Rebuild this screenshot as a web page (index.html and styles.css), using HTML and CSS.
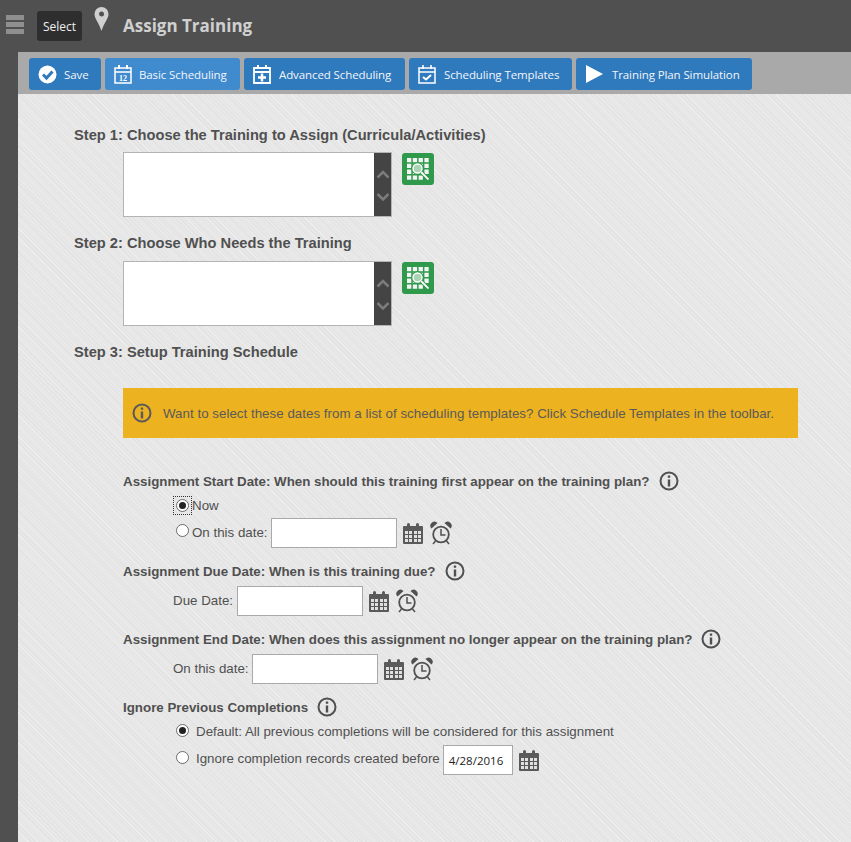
FILE: index.html
```html
<!DOCTYPE html>
<html lang="en">
<head>
<meta charset="utf-8">
<title>Assign Training</title>
<link rel="stylesheet" href="styles.css">
</head>
<body>
<svg class="defs" width="0" height="0" aria-hidden="true">
  <symbol id="cal" viewBox="0 0 22 22">
    <path fill="#5a5a5a" d="M2 3h3V1.500a1.500 1.500 0 0 1 3 0V3h6V1.500a1.500 1.500 0 0 1 3 0V3h3a1 1 0 0 1 1 1v16a1 1 0 0 1-1 1H2a1 1 0 0 1-1-1V4a1 1 0 0 1 1-1z"/>
    <path fill="#e0e0e0" d="M3 8h3v3H3zM7 8h3v3H7zM12 8h3v3h-3zM16 8h3v3h-3zM3 12h3v3H3zM7 12h3v3H7zM12 12h3v3h-3zM16 12h3v3h-3zM3 16h3v3H3zM7 16h3v3H7zM12 16h3v3h-3zM16 16h3v3h-3z"/>
  </symbol>
  <symbol id="clock" viewBox="0 0 22 24">
    <circle cx="11" cy="13.500" r="7.800" fill="none" stroke="#505050" stroke-width="1.800"/>
    <path fill="none" stroke="#505050" stroke-width="1.500" d="M11 8v6h4.500M5.500 20l-2.500 3M16.500 20l2.500 3"/>
    <path fill="#505050" d="M1.500 7.500a4 4 0 0 1 6-5.500zM20.500 7.500a4 4 0 0 0-6-5.500z"/>
  </symbol>
  <symbol id="info" viewBox="0 0 20 20">
    <circle cx="10" cy="10" r="8.500" fill="none" stroke="currentColor" stroke-width="2"/>
    <path fill="currentColor" d="M8.800 4.500h2.400v2.300H8.800zM8.800 8.500h2.400v7H8.800z"/>
  </symbol>
  <symbol id="grid" viewBox="0 0 22 22">
    <path fill="#f4f4f4" d="M0 0h4.300v4.300H0zM5.800 0h4.300v4.300H5.800zM11.600 0h4.300v4.300h-4.300zM17.400 0h4.300v4.300h-4.300zM0 5.800h4.300v4.300H0zM5.800 5.800h4.300v4.300H5.800zM11.600 5.800h4.300v4.300h-4.300zM17.400 5.800h4.300v4.300h-4.300zM0 11.600h4.300v4.300H0zM5.800 11.600h4.300v4.300H5.800zM11.600 11.600h4.300v4.300h-4.300zM17.400 11.600h4.300v4.300h-4.300zM0 17.400h4.300v4.300H0zM5.800 17.400h4.300v4.300H5.800zM11.600 17.400h4.300v4.300h-4.300z"/>
    <circle cx="10.500" cy="10.500" r="6.200" fill="#2f9a4b"/>
    <circle cx="10.500" cy="10.500" r="4.500" fill="#a9d5b5" stroke="#fff" stroke-width="1.400"/>
    <path stroke="#2f9a4b" stroke-width="3.600" d="M14 14l7.500 7.500"/>
    <path stroke="#fff" stroke-width="1.800" d="M14 14l7.500 7.500"/>
  </symbol>
</svg>

<header class="topbar">
  <span class="menu"><i></i><i></i><i></i></span>
  <button class="select">Select</button>
  <svg class="pin" width="15" height="24" viewBox="0 0 15 24"><path fill="#d0d0d0" fill-rule="evenodd" d="M7.500 0A7 7 0 0 0 .5 7c0 4.500 4.500 9 7 17 2.500-8 7-12.500 7-17a7 7 0 0 0-7-7zm0 4.500a2.500 2.500 0 1 1 0 5 2.500 2.500 0 0 1 0-5z"/></svg>
  <h1 class="title">Assign Training</h1>
</header>

<div class="shell">
  <nav class="toolbar">
    <a class="tool tool-save">
      <svg class="tool-icon" width="19" height="19" viewBox="0 0 19 19"><circle cx="9.500" cy="9.500" r="9" fill="#fff"/><path fill="none" stroke="#2f79bd" stroke-width="3" d="M5 9.500l3.500 3.500 6-6.500"/></svg>
      Save
    </a>
    <a class="tool tool-basic active">
      <svg class="tool-icon" width="18" height="20" viewBox="0 0 18 20"><path fill="none" stroke="#fff" stroke-width="1.500" d="M1 4h16v15H1zM1 8h16"/><path stroke="#fff" stroke-width="2" d="M5 1v4M13 1v4"/><text x="9" y="16.500" font-family="Liberation Serif" font-weight="700" font-size="8" text-anchor="middle" fill="#fff">12</text></svg>
      Basic Scheduling
    </a>
    <a class="tool tool-adv">
      <svg class="tool-icon" width="18" height="20" viewBox="0 0 18 20"><path fill="none" stroke="#fff" stroke-width="1.800" d="M1 4h16v15H1zM1 8h16"/><path stroke="#fff" stroke-width="2" d="M5 1v4M13 1v4"/><path stroke="#fff" stroke-width="2.500" d="M9 9.500v8M5 13.500h8"/></svg>
      Advanced Scheduling
    </a>
    <a class="tool tool-tmpl">
      <svg class="tool-icon" width="18" height="20" viewBox="0 0 18 20"><path fill="none" stroke="#fff" stroke-width="1.500" d="M1 4h16v15H1zM1 8h16"/><path stroke="#fff" stroke-width="1.600" d="M5 1v4M13 1v4"/><path fill="none" stroke="#fff" stroke-width="2" d="M5 13l3 2.500 5-4.500"/></svg>
      Scheduling Templates
    </a>
    <a class="tool tool-sim">
      <svg class="tool-icon" width="17" height="18" viewBox="0 0 17 18"><path fill="#fff" d="M0 0l17 9L0 18z"/></svg>
      Training Plan Simulation
    </a>
  </nav>

  <main class="content">
    <h2 class="step">Step 1: Choose the Training to Assign (Curricula/Activities)</h2>
    <div class="picker">
      <div class="listbox"><span class="list-area"></span><span class="scroll"><svg width="14" height="48" viewBox="0 0 14 48"><path fill="none" stroke="#7c7c7c" stroke-width="2.500" d="M1.500 16.500l5.500-5.500 5.500 5.500M1.500 33l5.500 5.500 5.500-5.500"/></svg></span></div>
      <a class="lookup"><svg width="22" height="22"><use href="#grid"/></svg></a>
    </div>

    <h2 class="step step-2">Step 2: Choose Who Needs the Training</h2>
    <div class="picker picker-2">
      <div class="listbox"><span class="list-area"></span><span class="scroll"><svg width="14" height="48" viewBox="0 0 14 48"><path fill="none" stroke="#7c7c7c" stroke-width="2.500" d="M1.500 16.500l5.500-5.500 5.500 5.500M1.500 33l5.500 5.500 5.500-5.500"/></svg></span></div>
      <a class="lookup"><svg width="22" height="22"><use href="#grid"/></svg></a>
    </div>

    <h2 class="step step-3">Step 3: Setup Training Schedule</h2>

    <div class="indent">
      <div class="notice">
        <svg class="notice-icon" width="20" height="20"><use href="#info"/></svg>
        <span>Want to select these dates from a list of scheduling templates? Click Schedule Templates in the toolbar.</span>
      </div>

      <section class="group group-start">
        <h3 class="label">Assignment Start Date: When should this training first appear on the training plan? <svg class="info" width="20" height="20"><use href="#info"/></svg></h3>
        <div class="row row-now"><span class="focus"><span class="radio on"></span></span><span class="now">Now</span></div>
        <div class="row row-on"><span class="radio"></span><span class="rtext">On this date:</span><span class="field field-tight"></span><svg class="ic-cal" width="22" height="22"><use href="#cal"/></svg><svg class="ic-clock" width="22" height="24"><use href="#clock"/></svg></div>
      </section>

      <section class="group">
        <h3 class="label">Assignment Due Date: When is this training due? <svg class="info" width="20" height="20"><use href="#info"/></svg></h3>
        <div class="row row-date"><span class="rtext">Due Date:</span><span class="field"></span><svg class="ic-cal" width="22" height="22"><use href="#cal"/></svg><svg class="ic-clock" width="22" height="24"><use href="#clock"/></svg></div>
      </section>

      <section class="group">
        <h3 class="label">Assignment End Date: When does this assignment no longer appear on the training plan? <svg class="info" width="20" height="20"><use href="#info"/></svg></h3>
        <div class="row row-date"><span class="rtext">On this date:</span><span class="field field-tight"></span><svg class="ic-cal" width="22" height="22"><use href="#cal"/></svg><svg class="ic-clock" width="22" height="24"><use href="#clock"/></svg></div>
      </section>

      <section class="group">
        <h3 class="label">Ignore Previous Completions <svg class="info" width="20" height="20"><use href="#info"/></svg></h3>
        <div class="row row-default"><span class="radio on"></span><span class="rtext">Default: All previous completions will be considered for this assignment</span></div>
        <div class="row row-before"><span class="radio"></span><span class="rtext">Ignore completion records created before</span><span class="field field-tight field-date">4/28/2016</span><svg class="ic-cal" width="22" height="22"><use href="#cal"/></svg></div>
      </section>
    </div>
  </main>
</div>
</body>
</html>
```

FILE: styles.css
```css
* { box-sizing: border-box; }
html, body { margin: 0; padding: 0; height: 100%; overflow: hidden; }
body { background: #505050; font-family: "Liberation Sans", Arial, sans-serif; color: #505050; }
.defs { position: absolute; }

.topbar { height: 52px; display: flex; align-items: flex-start; background: #505050; }
.menu { display: flex; flex-direction: column; gap: 2px; margin: 15px 0 0 6px; width: 18px; }
.menu i { display: block; height: 5px; background: #8f8f8f; }
.select { margin: 11px 0 0 13px; width: 45px; height: 30px; padding: 0; border: 0; border-radius: 3px; background: #2e2e2e; color: #f0f0f0; font: 12px "Open Sans", sans-serif; }
.pin { margin: 7px 0 0 12px; }
.title { margin: 14px 0 0 14px; font: 700 17px/24px "Open Sans", sans-serif; color: #d0d0d0; }

.shell { margin-left: 18px; height: 790px; display: flex; flex-direction: column; }
.toolbar { height: 42px; flex: none; display: flex; gap: 4px; padding: 6px 0 0 11px; background: #a9a9a9; }
.tool { height: 32px; display: flex; align-items: center; border-radius: 3px; background: #2f79bd; color: #f2f6fa; font: 11.500px "Open Sans", sans-serif; letter-spacing: -.1px; white-space: nowrap; }
.tool.active { background: #408ace; }
.tool-save { width: 72px; padding-left: 9px; }
.tool-basic { width: 135px; padding-left: 9px; }
.tool-adv { width: 161px; padding-left: 9px; }
.tool-tmpl { width: 163px; padding-left: 9px; }
.tool-sim { width: 176px; padding-left: 10px; }
.tool-icon { margin-right: 7px; flex: none; }
.tool-adv .tool-icon, .tool-tmpl .tool-icon { margin-right: 8px; }
.tool-sim .tool-icon { margin-right: 9px; }

.content {
  flex: 1;
  padding: 33px 0 0 56px;
  background-color: #e7e7e7;
  background-image:
    repeating-linear-gradient(45deg, rgba(255,255,255,.22) 0 1px, rgba(255,255,255,0) 1px 7px),
    repeating-linear-gradient(45deg, #e3e3e3 0 1px, #e8e8e8 1px 3px);
}
.step { margin: 0; font-size: 14.670px; line-height: 16px; font-weight: 700; color: #505050; }
.step-2 { margin-top: 18px; }
.step-3 { margin-top: 18px; }
.picker { display: flex; align-items: flex-start; margin: 9px 0 0 49px; }
.picker-2 { margin-top: 10px; }
.listbox { width: 269px; height: 65px; display: flex; background: #fff; border: 1px solid #b4b4b4; }
.list-area { flex: 1; }
.scroll { width: 17px; background: #444; display: flex; justify-content: center; align-items: center; }
.lookup { width: 32px; height: 32px; margin: 1px 0 0 10px; display: flex; align-items: center; justify-content: center; border-radius: 3px; background: #2f9a4b; }

.indent { margin-left: 49px; }
.notice { width: 675px; height: 50px; margin-top: 28px; display: flex; align-items: center; padding-left: 9px; background: #edb21f; font-size: 13.330px; letter-spacing: .02px; color: #5a5a5a; }
.notice-icon { margin-right: 11px; color: #5a5a5a; flex: none; }

.group { font-size: 13.330px; margin-top: 13px; }
.group-start { margin-top: 33px; }
.label { margin: 0; display: flex; align-items: center; height: 20px; font-size: 13.330px; font-weight: 700; color: #505050; }
.info { margin-left: 9px; color: #505050; }

.row { display: flex; align-items: center; }
.row-now { margin: 4px 0 0 50px; height: 20px; }
.focus { width: 19px; height: 19px; display: flex; align-items: center; justify-content: center; border: 1px dotted #333; }
.now { margin-top: 1px; }
.row-on { margin: 3px 0 0 53px; height: 30px; }
.row-date { margin: 5px 0 0 50px; height: 30px; }
.row-default { margin: 4px 0 0 53px; height: 20px; }
.row-before { margin: 4px 0 0 53px; height: 30px; }
.radio { width: 13px; height: 13px; flex: none; border-radius: 50%; background: #fff; border: 1px solid #6b6b6b; display: flex; align-items: center; justify-content: center; }
.radio.on::after { content: ""; width: 7px; height: 7px; border-radius: 50%; background: #222; }
.row-on .radio { margin: -5px 3px 0 0; }
.row-default .radio { margin: -2px 7px 0 0; }
.row-before .radio { margin: -6px 7px 0 0; }
.rtext { white-space: nowrap; position: relative; top: -1px; }
.row-default .rtext { top: 0; }
.row-before .rtext { top: -2px; }
.field { width: 126px; height: 30px; margin-left: 4px; background: #fff; border: 1px solid #a9a9a9; flex: none; }
.field-tight { margin-left: 3px; }
.field-date { width: 70px; display: flex; align-items: center; padding-left: 5px; color: #222; font: 11.500px "Open Sans", sans-serif; }
.ic-cal { margin: 2px 0 0 5px; flex: none; }
.ic-clock { margin: 0 0 0 6px; flex: none; }
```
